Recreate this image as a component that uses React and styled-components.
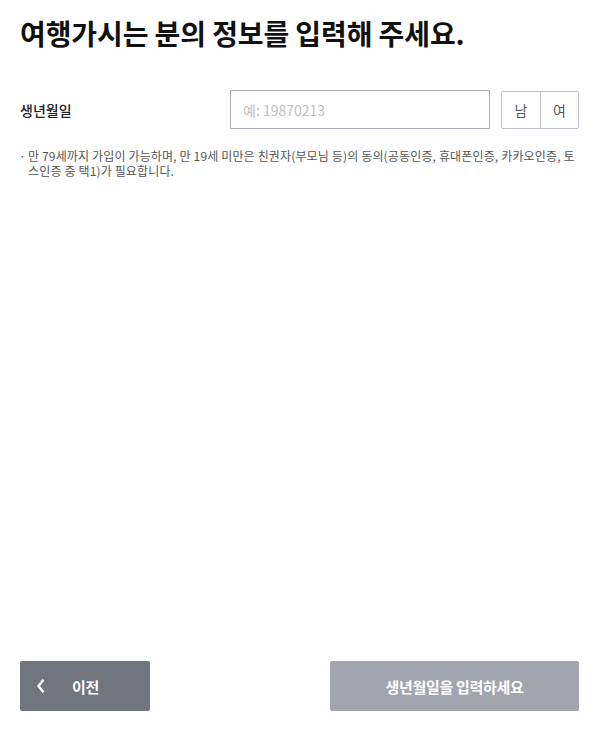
import React, { useState } from "react";
import styled, { createGlobalStyle } from "styled-components";

const Global = createGlobalStyle`
  html, body {
    margin: 0;
    padding: 0;
    background: #fff;
  }
  body {
    font-family: "Noto Sans CJK KR", "Noto Sans", sans-serif;
    color: #111;
  }
  * { box-sizing: border-box; }
`

const Page = styled.div`
  height: 732px;
  display: flex;
  flex-direction: column;
  padding: 13px 17px 21px 20px;
`

const Title = styled.h1`
  margin: 0;
  font-size: 28px;
  font-weight: 700;
  letter-spacing: -0.1px;
  line-height: 40px;
  color: #111;
`

const Row = styled.div`
  display: flex;
  align-items: center;
  margin-top: 37px;
`

const Label = styled.label`
  flex: 0 0 210px;
  font-size: 14px;
  font-weight: 500;
  color: #222;
`

const Input = styled.input`
  width: 260px;
  height: 39px;
  border: 1px solid #a9aeb8;
  border-radius: 0;
  padding: 0 12px;
  font-family: inherit;
  font-size: 14px;
  color: #333;
  outline: none;
  &::placeholder { color: #c0c0c0; }
`

const Toggle = styled.div`
  display: flex;
  margin-left: 11px;
  height: 38px;
  border: 1px solid #bcc1ca;
  border-radius: 2px;
  overflow: hidden;
`

const ToggleBtn = styled.button`
  width: 38px;
  border: none;
  border-left: ${(p) => (p.first ? "none" : "1px solid #bcc1ca")};
  background: ${(p) => (p.active ? "#eef0f4" : "#fff")};
  font-family: inherit;
  font-size: 14px;
  color: #555;
  padding: 0;
  cursor: pointer;
`

const Note = styled.ul`
  list-style: none;
  margin: 19px 0 0;
  padding: 0;
`

const NoteItem = styled.li`
  position: relative;
  padding-left: 8px;
  font-size: 12px;
  line-height: 15px;
  letter-spacing: 0.15px;
  color: #555;
  &::before {
    content: "·";
    position: absolute;
    left: -1px;
    top: 0;
  }
`

const Footer = styled.div`
  margin-top: auto;
  display: flex;
  justify-content: space-between;
`

const Button = styled.button`
  height: 50px;
  width: ${(p) => p.w}px;
  border: none;
  border-radius: 2px;
  background: ${(p) => p.bg};
  color: #fff;
  font-family: inherit;
  font-size: 15px;
  font-weight: 700;
  letter-spacing: -0.3px;
  display: flex;
  align-items: center;
  justify-content: ${(p) => (p.left ? "flex-start" : "center")};
  padding: ${(p) => (p.left ? "0 0 0 15px" : "0")};
  gap: 25px;
`

const Chevron = () => (
  <svg width="12" height="16" viewBox="0 0 12 16">
    <path d="M8.5 1.8 L3.5 8 L8.5 14.2" fill="none" stroke="#fff" strokeWidth="2.4" />
  </svg>
)

export default function App() {
  const [gender, setGender] = useState(null);
  return (
    <Page>
      <Global />
      <Title>여행가시는 분의 정보를 입력해 주세요.</Title>
      <Row>
        <Label>생년월일</Label>
        <Input placeholder="예: 19870213" />
        <Toggle>
          <ToggleBtn first active={gender === "m"} onClick={() => setGender("m")}>남</ToggleBtn>
          <ToggleBtn active={gender === "f"} onClick={() => setGender("f")}>여</ToggleBtn>
        </Toggle>
      </Row>
      <Note>
        <NoteItem>
          만 79세까지 가입이 가능하며, 만 19세 미만은 친권자(부모님 등)의 동의(공동인증, 휴대폰인증, 카카오인증, 토스인증 중 택1)가 필요합니다.
        </NoteItem>
      </Note>
      <Footer>
        <Button w={130} bg="#71757e" left>
          <Chevron />
          이전
        </Button>
        <Button w={249} bg="#a2a4ae">생년월일을 입력하세요</Button>
      </Footer>
    </Page>
  );
}
